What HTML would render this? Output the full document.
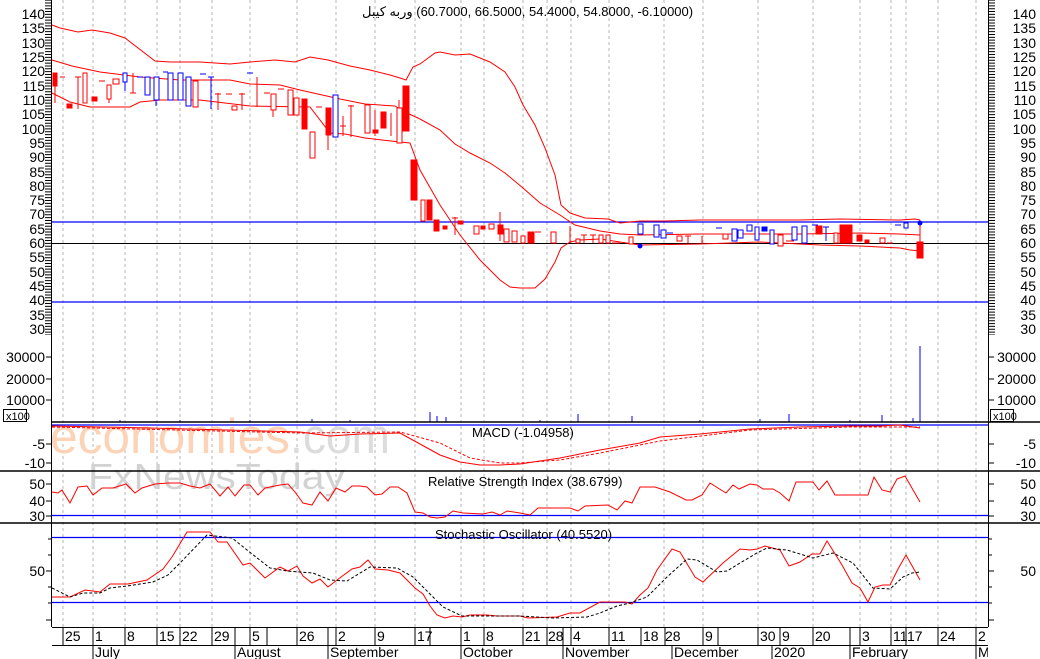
<!DOCTYPE html>
<html><head><meta charset="utf-8"><style>
html,body{margin:0;padding:0;background:#fff;}
svg{display:block;font-family:"Liberation Sans","Noto Sans CJK SC",sans-serif;}
.g{stroke:#b4b4b4;stroke-dasharray:3,3;stroke-width:1}
.R{fill:#f00;stroke:#f00}
.O{fill:#fff;stroke:#f00}
.B{fill:#fff;stroke:#00f}
.BF{fill:#00f;stroke:#00f}
.wr{stroke:#f00}
.wb{stroke:#00f}
text{font-size:14px;fill:#000}
</style></head><body>
<svg width="1040" height="659" viewBox="0 0 1040 659" xmlns="http://www.w3.org/2000/svg">
<rect width="1040" height="659" fill="#fff"/>
<!-- grid -->
<g class="g">
<line x1="63" y1="0" x2="63" y2="627"/><line x1="93" y1="0" x2="93" y2="627"/><line x1="125" y1="0" x2="125" y2="627"/><line x1="157" y1="0" x2="157" y2="627"/><line x1="180" y1="0" x2="180" y2="627"/><line x1="212" y1="0" x2="212" y2="627"/><line x1="250" y1="0" x2="250" y2="627"/><line x1="297" y1="0" x2="297" y2="627"/><line x1="336" y1="0" x2="336" y2="627"/><line x1="375" y1="0" x2="375" y2="627"/><line x1="415" y1="0" x2="415" y2="627"/><line x1="461" y1="0" x2="461" y2="627"/><line x1="484" y1="0" x2="484" y2="627"/><line x1="523" y1="0" x2="523" y2="627"/><line x1="547" y1="0" x2="547" y2="627"/><line x1="571" y1="0" x2="571" y2="627"/><line x1="609" y1="0" x2="609" y2="627"/><line x1="664" y1="0" x2="664" y2="627"/><line x1="703" y1="0" x2="703" y2="627"/><line x1="758" y1="0" x2="758" y2="627"/><line x1="813" y1="0" x2="813" y2="627"/><line x1="860" y1="0" x2="860" y2="627"/><line x1="891" y1="0" x2="891" y2="627"/><line x1="906" y1="0" x2="906" y2="627"/><line x1="938" y1="0" x2="938" y2="627"/><line x1="976" y1="0" x2="976" y2="627"/>
</g>
<!-- watermark -->
<text x="50" y="453" style="font-size:49px;fill:#fcd3b6" textLength="240" lengthAdjust="spacingAndGlyphs">economies</text>
<text x="290" y="453" style="font-size:49px;fill:#dcdcdc" textLength="100" lengthAdjust="spacingAndGlyphs">.com</text>
<text x="88" y="489" style="font-size:36px;fill:#d2d2d2" textLength="257" lengthAdjust="spacingAndGlyphs">FxNewsToday</text>

<!-- horizontal level lines -->
<g stroke="#00f" stroke-width="1.2">
<line x1="52" y1="222" x2="988" y2="222"/>
<line x1="52" y1="302" x2="988" y2="302"/>
<line x1="52" y1="425" x2="988" y2="425"/>
<line x1="52" y1="515.5" x2="988" y2="515.5"/>
<line x1="52" y1="537.5" x2="988" y2="537.5"/>
<line x1="52" y1="602.5" x2="988" y2="602.5"/>
</g>
<line x1="52" y1="243.5" x2="988" y2="243.5" stroke="#000"/>

<!-- bollinger -->
<g fill="none" stroke="#f00" stroke-width="1">
<polyline points="52,25 60,28 78,32 92,30 110,33 125,38 155,61 170,62 200,62 230,64 250,62 275,60 295,62 310,57 328,60 350,66 370,70 390,75 400,78 406,80 413,67 420,64 435,53 440,52 455,55 470,54 490,62 505,72 515,87 523,105 535,125 545,148 555,175 561,205 570,213 585,218 608,219 620,223 640,221 665,221 700,220 740,220 800,220 840,219 900,220 915,219 920,220"/>
<polyline points="52,60 72,66 100,72 140,77 180,80 230,80 250,84 280,85 300,90 340,99 365,104 395,106 405,112 420,119 440,130 455,144 470,153 490,163 505,173 523,188 540,203 560,215 575,225 600,231 620,234 640,235 700,234 800,234 860,233 900,234 920,235"/>
<polyline points="52,93 70,102 90,107 130,107 140,102 160,100 200,100 250,106 310,107 330,133 345,134 365,138 400,142 410,143 420,170 440,205 460,235 480,260 500,280 510,287 520,288 535,288 545,279 555,262 561,248 570,242 580,240 600,239 640,245 700,244 760,242 820,245 860,246 900,248 910,250 920,251"/>
</g>

<!-- candles -->
<g stroke-width="1">
<line class="wr" x1="55" y1="73" x2="55" y2="103"/><rect class="R" x="53" y="73" width="4" height="13"/>
<line class="wr" x1="60" y1="77" x2="65" y2="77"/>
<rect class="R" x="67" y="104" width="5" height="4"/>
<line class="wr" x1="78" y1="77" x2="78" y2="109"/><line class="wr" x1="75" y1="77" x2="81" y2="77"/>
<rect class="O" x="83" y="73" width="4" height="30"/>
<rect class="R" x="92" y="97" width="5" height="4"/>
<line class="wr" x1="99" y1="81" x2="105" y2="81"/>
<line class="wr" x1="109" y1="99" x2="109" y2="103"/><rect class="O" x="107" y="85" width="4" height="14"/>
<rect class="O" x="113" y="79" width="6" height="5"/>
<line class="wb" x1="125" y1="82" x2="125" y2="91"/><rect class="B" x="123" y="73" width="4" height="9"/>
<line class="wr" x1="133" y1="73" x2="133" y2="93"/><line class="wr" x1="130" y1="93" x2="136" y2="93"/>
<line class="wb" x1="137" y1="77" x2="143" y2="77"/>
<rect class="B" x="145" y="77" width="5" height="18"/>
<line class="wb" x1="156" y1="100" x2="156" y2="106"/><rect class="B" x="154" y="77" width="5" height="23"/>
<line class="wb" x1="163" y1="72" x2="168" y2="72"/>
<rect class="B" x="168" y="73" width="5" height="27"/>
<rect class="B" x="178" y="73" width="5" height="27"/>
<rect class="B" x="186" y="77" width="5" height="29"/>
<rect class="O" x="193" y="81" width="5" height="26"/>
<line class="wb" x1="200" y1="74" x2="206" y2="74"/>
<line class="wb" x1="211" y1="77" x2="211" y2="109"/><line class="wb" x1="208" y1="77" x2="214" y2="77"/>
<line class="wr" x1="218" y1="93" x2="218" y2="110"/><line class="wr" x1="215" y1="94" x2="221" y2="94"/>
<line class="wr" x1="226" y1="94" x2="232" y2="94"/>
<rect class="O" x="232" y="106" width="5" height="4"/>
<line class="wr" x1="242" y1="93" x2="242" y2="110"/><line class="wr" x1="239" y1="94" x2="245" y2="94"/>
<line class="wb" x1="247" y1="73" x2="253" y2="73"/>
<line class="wr" x1="257" y1="77" x2="257" y2="107"/>
<line class="wr" x1="264" y1="93" x2="270" y2="93"/>
<line class="wr" x1="273" y1="110" x2="273" y2="117"/><rect class="O" x="271" y="94" width="5" height="16"/>
<line class="wr" x1="278" y1="89" x2="284" y2="89"/>
<rect class="O" x="288" y="90" width="5" height="25"/>
<rect class="O" x="294" y="98" width="5" height="17"/>
<rect class="R" x="302" y="99" width="5" height="30"/>
<rect class="O" x="310" y="132" width="5" height="26"/>
<line class="wr" x1="316" y1="107" x2="322" y2="107"/>
<line class="wr" x1="328" y1="135" x2="328" y2="150"/><rect class="R" x="326" y="108" width="5" height="27"/>
<rect class="B" x="333" y="95" width="5" height="42"/>
<line class="wr" x1="343" y1="116" x2="343" y2="136"/><line class="wr" x1="340" y1="126" x2="346" y2="126"/>
<line class="wr" x1="351" y1="105" x2="351" y2="137"/><line class="wr" x1="348" y1="106" x2="354" y2="106"/>
<rect class="O" x="365" y="105" width="5" height="28"/>
<line class="wr" x1="375" y1="110" x2="375" y2="136"/><rect class="R" x="373" y="130" width="5" height="3"/>
<rect class="R" x="381" y="112" width="5" height="16"/>
<line class="wr" x1="391" y1="113" x2="391" y2="136"/>
<line class="wr" x1="399" y1="100" x2="399" y2="143"/><rect class="O" x="397" y="108" width="5" height="35"/>
<rect class="R" x="403" y="86" width="6" height="45"/>
<rect class="R" x="411" y="160" width="6" height="40"/>
<rect class="O" x="421" y="200" width="4" height="21"/>
<rect class="R" x="427" y="200" width="5" height="20"/>
<rect class="R" x="434" y="220" width="5" height="11"/>
<rect class="R" x="443" y="226" width="4" height="3"/>
<line class="wr" x1="455" y1="217" x2="455" y2="235"/><line class="wr" x1="452" y1="218" x2="458" y2="218"/>
<rect class="R" x="458" y="221" width="5" height="3"/>
<rect class="O" x="474" y="226" width="5" height="8"/>
<rect class="R" x="481" y="226" width="4" height="3"/>
<rect class="O" x="489" y="224" width="5" height="5"/>
<line class="wr" x1="500" y1="212" x2="500" y2="241"/><rect class="R" x="498" y="225" width="5" height="9"/>
<rect class="O" x="504" y="229" width="5" height="13"/>
<rect class="O" x="512" y="231" width="5" height="11"/>
<rect class="O" x="521" y="236" width="4" height="7"/>
<rect class="R" x="528" y="232" width="6" height="11"/>
<line class="wr" x1="535" y1="232" x2="541" y2="232"/>
<rect class="O" x="551" y="232" width="5" height="11"/>
<line class="wr" x1="570" y1="226" x2="570" y2="243"/>
<rect class="O" x="576" y="239" width="4" height="4"/>
<line class="wr" x1="584" y1="235" x2="584" y2="243"/><line class="wr" x1="581" y1="235" x2="587" y2="235"/>
<line class="wr" x1="593" y1="235" x2="593" y2="243"/><line class="wr" x1="590" y1="235" x2="596" y2="235"/>
<rect class="O" x="599" y="235" width="4" height="8"/>
<rect class="O" x="606" y="235" width="4" height="8"/>
<line class="wr" x1="612" y1="243" x2="620" y2="243"/>
<rect class="O" x="629" y="237" width="4" height="7"/>
<rect class="B" x="638" y="224" width="5" height="10"/>
<rect class="B" x="654" y="225" width="5" height="12"/>
<rect class="B" x="661" y="230" width="5" height="8"/>
<line class="wb" x1="667" y1="233" x2="673" y2="233"/>
<rect class="O" x="677" y="236" width="5" height="5"/>
<line class="wr" x1="688" y1="236" x2="688" y2="243"/><line class="wr" x1="685" y1="236" x2="691" y2="236"/>
<line class="wr" x1="702" y1="236" x2="702" y2="244"/>
<line class="wb" x1="716" y1="228" x2="722" y2="228"/>
<rect class="O" x="723" y="234" width="5" height="5"/>
<rect class="B" x="732" y="229" width="5" height="12"/>
<rect class="B" x="738" y="230" width="5" height="8"/>
<rect class="B" x="747" y="225" width="5" height="6"/>
<rect class="B" x="755" y="227" width="4" height="13"/>
<rect class="BF" x="762" y="227" width="5" height="4"/>
<rect class="B" x="770" y="230" width="4" height="14"/>
<rect class="O" x="778" y="235" width="5" height="11"/>
<line class="wr" x1="786" y1="241" x2="794" y2="241"/>
<rect class="B" x="792" y="227" width="5" height="13"/>
<rect class="B" x="802" y="226" width="5" height="17"/>
<line class="wb" x1="812" y1="225" x2="818" y2="225"/>
<rect class="R" x="816" y="226" width="6" height="8"/>
<line class="wb" x1="826" y1="227" x2="826" y2="241"/><line class="wb" x1="823" y1="227" x2="829" y2="227"/>
<rect class="O" x="834" y="233" width="4" height="10"/>
<rect class="R" x="840" y="225" width="5" height="18"/>
<rect class="R" x="846" y="225" width="6" height="18"/>
<rect class="R" x="857" y="235" width="5" height="6"/>
<rect class="R" x="865" y="240" width="4" height="3"/>
<rect class="O" x="880" y="238" width="5" height="5"/>
<line class="wr" x1="887" y1="243" x2="893" y2="243"/>
<line class="wb" x1="895" y1="225" x2="901" y2="225"/>
<rect class="B" x="904" y="223" width="4" height="5"/>
<line class="wr" x1="920" y1="222" x2="920" y2="258"/><rect class="R" x="917" y="242" width="6" height="16"/>
<circle cx="920" cy="223" r="2.5" fill="#00f"/>
<circle cx="640" cy="246" r="2.5" fill="#00f"/>
</g>

<!-- volume bars -->
<g stroke="#00f">
<line x1="430" y1="412" x2="430" y2="422"/><line x1="437" y1="416" x2="437" y2="422"/><line x1="446" y1="417" x2="446" y2="422"/>
<line x1="578" y1="414" x2="578" y2="422"/><line x1="632" y1="416" x2="632" y2="422"/><line x1="789" y1="414" x2="789" y2="422"/>
<line x1="882" y1="415" x2="882" y2="422"/><line x1="913" y1="418" x2="913" y2="422"/><line x1="920" y1="346" x2="920" y2="422"/>
<line x1="120" y1="420" x2="120" y2="422"/><line x1="180" y1="420" x2="180" y2="422"/><line x1="250" y1="420" x2="250" y2="422"/><line x1="312" y1="419" x2="312" y2="422"/><line x1="350" y1="420" x2="350" y2="422"/><line x1="540" y1="420" x2="540" y2="422"/><line x1="700" y1="420" x2="700" y2="422"/><line x1="760" y1="419" x2="760" y2="422"/><line x1="850" y1="420" x2="850" y2="422"/>
</g>

<!-- MACD -->
<polyline fill="none" stroke="#f00" points="52,426 150,428 300,432 330,436 360,434 400,433 420,444 440,455 460,462 480,465 500,465 520,464 560,458 600,450 640,443 660,437 700,434 750,429 800,427 850,426 880,426 900,425 920,428"/>
<polyline fill="none" stroke="#f00" stroke-dasharray="3,2" points="52,427 300,433 400,432 440,443 470,458 500,463 520,463 560,460 600,453 660,441 750,430 850,427 920,427"/>

<!-- RSI -->
<polyline fill="none" stroke="#f00" points="52,492 58,493 62,490 70,503 78,487 87,486 93,495 102,488 113,488 126,484 135,493 142,488 155,484 168,483 180,483 190,486 200,488 210,484 220,496 228,487 235,496 244,485 250,485 258,495 265,488 280,485 288,484 295,492 303,503 312,505 320,492 328,501 336,488 345,492 352,486 360,486 367,487 375,495 382,494 390,487 398,487 407,493 415,512 423,513 430,517 437,518 445,517 453,511 463,513 483,514 492,512 500,515 507,511 520,513 530,515 538,508 570,508 578,511 585,506 608,505 617,510 625,501 632,503 640,487 655,487 670,492 686,500 692,500 702,495 710,483 726,493 733,485 739,489 750,484 757,485 763,489 773,489 780,493 789,501 796,482 813,482 819,490 827,481 835,495 868,495 874,477 882,490 890,492 897,479 905,476 920,502"/>

<!-- Stochastic -->
<polyline fill="none" stroke="#f00" points="52,597 70,597 85,590 100,592 110,584 128,584 147,580 163,569 172,557 178,547 187,532 210,532 218,542 227,542 243,565 250,563 265,578 280,567 288,571 297,566 303,576 312,583 320,579 328,587 337,580 352,569 360,567 368,560 375,569 388,570 400,573 415,588 423,594 430,606 437,615 445,618 453,616 462,617 470,615 487,615 497,616 520,616 528,618 557,617 570,613 580,613 600,602 625,602 632,604 640,595 648,588 657,570 672,549 680,552 695,577 703,582 723,563 740,549 750,550 757,549 765,546 780,550 789,566 800,562 812,554 820,554 827,541 842,565 852,583 860,588 868,602 875,587 883,585 890,585 898,569 906,555 920,580"/>
<polyline fill="none" stroke="#000" stroke-dasharray="3,2" points="52,588 70,597 83,593 100,593 110,588 127,586 153,582 168,575 180,563 207,535 232,538 247,550 270,568 287,571 313,573 330,580 347,581 370,567 397,568 413,577 423,587 443,607 462,616 520,616 553,618 587,617 600,613 617,606 630,603 647,597 667,577 687,559 697,560 717,572 727,571 740,563 757,553 767,548 787,550 813,558 833,553 853,563 873,588 890,589 903,577 912,573 920,572"/>

<!-- panel separators -->
<g stroke="#000" stroke-width="1.5">
<line x1="52" y1="422" x2="1040" y2="422"/>
<line x1="0" y1="471" x2="1040" y2="471"/>
<line x1="0" y1="523" x2="1040" y2="523"/>
</g>
<line x1="51.5" y1="0" x2="51.5" y2="627" stroke="#000"/>
<line x1="988.5" y1="0" x2="988.5" y2="627" stroke="#000"/>
<line x1="48" y1="0" x2="48" y2="335" stroke="#000" stroke-width="6" stroke-dasharray="1,1.8625" stroke-dashoffset="0.4"/>
<line x1="992" y1="0" x2="992" y2="335" stroke="#000" stroke-width="6" stroke-dasharray="1,1.8625" stroke-dashoffset="0.4"/>

<!-- left labels -->
<g text-anchor="end">
<text x="45" y="19">140</text><text x="45" y="33">135</text><text x="45" y="48">130</text><text x="45" y="62">125</text><text x="45" y="76">120</text><text x="45" y="91">115</text><text x="45" y="105">110</text><text x="45" y="119">105</text><text x="45" y="134">100</text><text x="45" y="148">95</text><text x="45" y="162">90</text><text x="45" y="177">85</text><text x="45" y="191">80</text><text x="45" y="205">75</text><text x="45" y="219">70</text><text x="45" y="234">65</text><text x="45" y="248">60</text><text x="45" y="262">55</text><text x="45" y="277">50</text><text x="45" y="291">45</text><text x="45" y="305">40</text><text x="45" y="320">35</text><text x="45" y="334">30</text>
<text x="45" y="362">30000</text><text x="45" y="384">20000</text><text x="45" y="405">10000</text>
<text x="45" y="449">-5</text><text x="45" y="468">-10</text>
<text x="45" y="489">50</text><text x="45" y="506">40</text><text x="45" y="521">30</text>
<text x="45" y="576">50</text>
</g>
<g text-anchor="end">
<text x="1036" y="19">140</text><text x="1036" y="33">135</text><text x="1036" y="48">130</text><text x="1036" y="62">125</text><text x="1036" y="76">120</text><text x="1036" y="91">115</text><text x="1036" y="105">110</text><text x="1036" y="119">105</text><text x="1036" y="134">100</text><text x="1036" y="148">95</text><text x="1036" y="162">90</text><text x="1036" y="177">85</text><text x="1036" y="191">80</text><text x="1036" y="205">75</text><text x="1036" y="219">70</text><text x="1036" y="234">65</text><text x="1036" y="248">60</text><text x="1036" y="262">55</text><text x="1036" y="277">50</text><text x="1036" y="291">45</text><text x="1036" y="305">40</text><text x="1036" y="320">35</text><text x="1036" y="334">30</text>
<text x="1036" y="362">30000</text><text x="1036" y="384">20000</text><text x="1036" y="405">10000</text>
<text x="1036" y="449">-5</text><text x="1036" y="468">-10</text>
<text x="1036" y="489">50</text><text x="1036" y="506">40</text><text x="1036" y="521">30</text>
<text x="1036" y="576">50</text>
</g>
<g stroke="#000">
<line x1="46" y1="357" x2="52" y2="357"/><line x1="46" y1="379" x2="52" y2="379"/><line x1="46" y1="400" x2="52" y2="400"/>
<line x1="46" y1="444" x2="52" y2="444"/><line x1="46" y1="463" x2="52" y2="463"/>
<line x1="46" y1="484" x2="52" y2="484"/><line x1="46" y1="501" x2="52" y2="501"/><line x1="46" y1="516" x2="52" y2="516"/>
<line x1="46" y1="571" x2="52" y2="571"/><line x1="48" y1="539" x2="52" y2="539"/><line x1="48" y1="555" x2="52" y2="555"/><line x1="48" y1="587" x2="52" y2="587"/><line x1="48" y1="603" x2="52" y2="603"/><line x1="46" y1="620" x2="52" y2="620"/>
<line x1="988" y1="357" x2="994" y2="357"/><line x1="988" y1="379" x2="994" y2="379"/><line x1="988" y1="400" x2="994" y2="400"/>
<line x1="988" y1="444" x2="994" y2="444"/><line x1="988" y1="463" x2="994" y2="463"/>
<line x1="988" y1="484" x2="994" y2="484"/><line x1="988" y1="501" x2="994" y2="501"/><line x1="988" y1="516" x2="994" y2="516"/>
<line x1="988" y1="571" x2="994" y2="571"/><line x1="988" y1="539" x2="992" y2="539"/><line x1="988" y1="555" x2="992" y2="555"/><line x1="988" y1="587" x2="992" y2="587"/><line x1="988" y1="603" x2="992" y2="603"/><line x1="988" y1="620" x2="994" y2="620"/>
</g>
<rect x="3.5" y="409.5" width="23" height="12" fill="#fff" stroke="#000"/>
<text x="6" y="420" style="font-size:11px">x100</text>
<rect x="990.5" y="409.5" width="23" height="12" fill="#fff" stroke="#000"/>
<text x="993" y="420" style="font-size:11px">x100</text>

<!-- titles -->
<text x="362" y="16" style="font-size:13px" direction="ltr" unicode-bidi="embed">&#x200E;<tspan>وربه كيبل</tspan>&#x200E; (60.7000, 66.5000, 54.4000, 54.8000, -6.10000)</text>
<text x="472" y="437" style="font-size:13px">MACD (-1.04958)</text>
<text x="428" y="486" style="font-size:13px">Relative Strength Index (38.6799)</text>
<text x="435" y="539" style="font-size:13px">Stochastic Oscillator (40.5520)</text>

<!-- date axis -->
<g stroke="#000">
<line x1="52" y1="627.5" x2="988" y2="627.5"/>
<line x1="52" y1="645.5" x2="988" y2="645.5"/>
<line x1="63" y1="627" x2="63" y2="645"/><line x1="93" y1="627" x2="93" y2="645"/><line x1="125" y1="627" x2="125" y2="645"/><line x1="157" y1="627" x2="157" y2="645"/><line x1="180" y1="627" x2="180" y2="645"/><line x1="212" y1="627" x2="212" y2="645"/><line x1="235" y1="627" x2="235" y2="645"/><line x1="250" y1="627" x2="250" y2="645"/><line x1="267" y1="627" x2="267" y2="645"/><line x1="297" y1="627" x2="297" y2="645"/><line x1="328" y1="627" x2="328" y2="645"/><line x1="336" y1="627" x2="336" y2="645"/><line x1="375" y1="627" x2="375" y2="645"/><line x1="415" y1="627" x2="415" y2="645"/><line x1="430" y1="627" x2="430" y2="645"/><line x1="461" y1="627" x2="461" y2="645"/><line x1="484" y1="627" x2="484" y2="645"/><line x1="523" y1="627" x2="523" y2="645"/><line x1="547" y1="627" x2="547" y2="645"/><line x1="563" y1="627" x2="563" y2="645"/><line x1="571" y1="627" x2="571" y2="645"/><line x1="609" y1="627" x2="609" y2="645"/><line x1="641" y1="627" x2="641" y2="645"/><line x1="665" y1="627" x2="665" y2="645"/><line x1="703" y1="627" x2="703" y2="645"/><line x1="718" y1="627" x2="718" y2="645"/><line x1="758" y1="627" x2="758" y2="645"/><line x1="780" y1="627" x2="780" y2="645"/><line x1="813" y1="627" x2="813" y2="645"/><line x1="850" y1="627" x2="850" y2="645"/><line x1="860" y1="627" x2="860" y2="645"/><line x1="891" y1="627" x2="891" y2="645"/><line x1="906" y1="627" x2="906" y2="645"/><line x1="938" y1="627" x2="938" y2="645"/><line x1="976" y1="627" x2="976" y2="645"/>
<line x1="93" y1="645" x2="93" y2="659"/><line x1="235" y1="645" x2="235" y2="659"/><line x1="328" y1="645" x2="328" y2="659"/><line x1="461" y1="645" x2="461" y2="659"/><line x1="563" y1="645" x2="563" y2="659"/><line x1="672" y1="645" x2="672" y2="659"/><line x1="772" y1="645" x2="772" y2="659"/><line x1="850" y1="645" x2="850" y2="659"/><line x1="976" y1="645" x2="976" y2="659"/>
</g>
<g style="font-size:13px">
<text x="65" y="641">25</text><text x="95" y="641">1</text><text x="127" y="641">8</text><text x="159" y="641">15</text><text x="182" y="641">22</text><text x="214" y="641">29</text><text x="252" y="641">5</text><text x="299" y="641">26</text><text x="338" y="641">2</text><text x="377" y="641">9</text><text x="417" y="641">17</text><text x="463" y="641">1</text><text x="486" y="641">8</text><text x="525" y="641">21</text><text x="548" y="641">28</text><text x="573" y="641">4</text><text x="611" y="641">11</text><text x="643" y="641">18</text><text x="665" y="641">28</text><text x="705" y="641">9</text><text x="760" y="641">30</text><text x="782" y="641">9</text><text x="815" y="641">20</text><text x="862" y="641">3</text><text x="893" y="641">11</text><text x="907" y="641">17</text><text x="940" y="641">24</text><text x="978" y="641">2</text>
<text x="95" y="657">July</text><text x="237" y="657">August</text><text x="330" y="657">September</text><text x="463" y="657">October</text><text x="565" y="657">November</text><text x="674" y="657">December</text><text x="774" y="657">2020</text><text x="852" y="657">February</text><text x="978" y="657">Ma</text>
</g>
<rect x="988" y="627" width="52" height="32" fill="#fff"/>
</svg>
</body></html>
